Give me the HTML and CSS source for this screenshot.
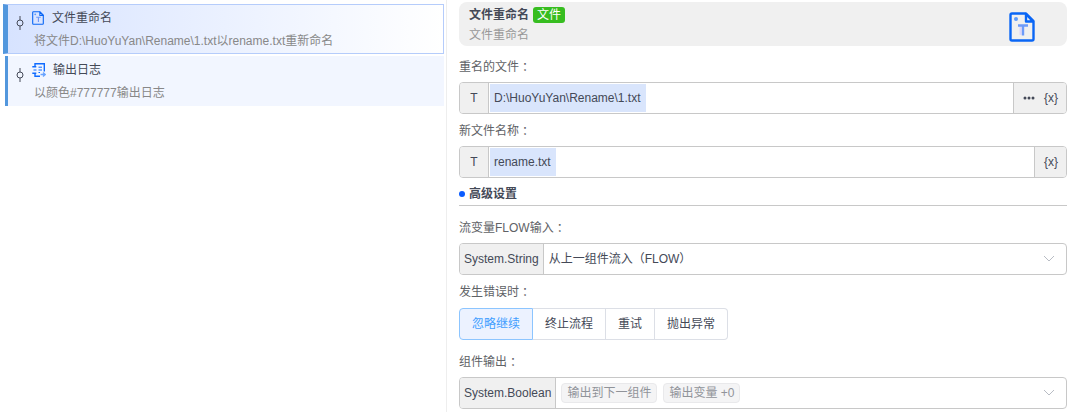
FILE: index.html
```html
<!DOCTYPE html>
<html lang="zh-CN">
<head>
    <meta charset="UTF-8">
    <meta name="viewport" content="width=device-width, initial-scale=1.0">
    <title>文件重命名</title>
    <link rel="stylesheet" href="styles.css">
</head>
<body>
    <!-- Flow steps -->
    <aside class="steps">
        <div class="step active">
            <svg class="node" viewBox="0 0 8 16"><path d="M4 1v4M4 11v4"/><circle cx="4" cy="8" r="3"/></svg>
            <div class="step-body">
                <div class="step-title">
                    <svg class="icon" viewBox="0 0 26 30"><use href="#file-icon"/></svg>
                    <span>文件重命名</span>
                </div>
                <div class="step-desc">将文件D:\HuoYuYan\Rename\1.txt以rename.txt重新命名</div>
            </div>
        </div>
        <div class="step nested">
            <svg class="node" viewBox="0 0 8 16"><path d="M4 1v4M4 11v4"/><circle cx="4" cy="8" r="3"/></svg>
            <div class="step-body">
                <div class="step-title">
                    <svg class="icon log-icon" viewBox="0 0 14 14">
                        <path d="M3 3.500V.8h9.300V8.500M3 10.500v2.700h5M.3 3.700h4M.3 10.300h4"/>
                        <path class="thin" d="M1.500 7h3M6.500 4.200h3.500M6.500 7h3.500M6.500 9.500h1.500"/>
                        <path class="soft" d="M8.500 11.500h4.500M11 9.500l2.200 2-2.200 2"/>
                    </svg>
                    <span>输出日志</span>
                </div>
                <div class="step-desc">以颜色#777777输出日志</div>
            </div>
        </div>
    </aside>

    <!-- Settings of the selected step -->
    <main class="settings">
        <header class="card">
            <div class="card-text">
                <div class="card-title"><h1>文件重命名</h1><span class="tag">文件</span></div>
                <div class="card-desc">文件重命名</div>
            </div>
            <svg class="card-icon" viewBox="0 0 26 30">
                <g id="file-icon">
                    <path class="file-line" d="M3 1.500h14L24.500 9v18q0 1.500-1.500 1.500H3Q1.500 28.500 1.500 27V3Q1.500 1.500 3 1.500z"/>
                    <path class="file-line" d="M17 2v7.500h7z"/>
                    <circle class="file-soft" cx="7" cy="7" r="2"/>
                    <path class="file-t-shade" d="M11.500 14v9"/>
                    <path class="file-t" d="M9 13.500h10M14 13.500v10"/>
                </g>
            </svg>
        </header>

        <form>
            <label class="label" for="source">重名的文件<span class="colon" lang="zh-TW">：</span></label>
            <div class="field">
                <span class="prefix type">T</span>
                <div class="value"><input class="chip" type="text" id="source" value="D:\HuoYuYan\Rename\1.txt"></div>
                <div class="suffix">
                    <button type="button" aria-label="选择文件">
                        <svg class="dots" viewBox="0 0 12 4"><circle cx="2" cy="2" r="1.500"/><circle cx="6" cy="2" r="1.500"/><circle cx="10" cy="2" r="1.500"/></svg>
                    </button>
                    <button type="button">{x}</button>
                </div>
            </div>

            <label class="label" for="target">新文件名称<span class="colon" lang="zh-TW">：</span></label>
            <div class="field">
                <span class="prefix type">T</span>
                <div class="value"><input class="chip" type="text" id="target" value="rename.txt"></div>
                <div class="suffix">
                    <button type="button">{x}</button>
                </div>
            </div>

            <h2 class="section">高级设置</h2>

            <label class="label" for="flow">流变量FLOW输入<span class="colon" lang="zh-TW">：</span></label>
            <div class="field">
                <span class="prefix">System.String</span>
                <select id="flow">
                    <option>从上一组件流入（FLOW）</option>
                </select>
                <svg class="arrow" viewBox="0 0 12 8"><path d="M1 1l5 5 5-5"/></svg>
            </div>

            <div class="label" id="error-label">发生错误时<span class="colon" lang="zh-TW">：</span></div>
            <div class="radios" role="radiogroup" aria-labelledby="error-label">
                <label><input type="radio" name="error" checked><span>忽略继续</span></label>
                <label><input type="radio" name="error"><span>终止流程</span></label>
                <label><input type="radio" name="error"><span>重试</span></label>
                <label><input type="radio" name="error"><span>抛出异常</span></label>
            </div>

            <label class="label" for="output">组件输出<span class="colon" lang="zh-TW">：</span></label>
            <div class="field">
                <span class="prefix">System.Boolean</span>
                <button class="multi" type="button" id="output">
                    <span class="option">输出到下一组件</span>
                    <span class="option">输出变量 +0</span>
                </button>
                <svg class="arrow" viewBox="0 0 12 8"><path d="M1 1l5 5 5-5"/></svg>
            </div>
        </form>
    </main>
</body>
</html>
```

FILE: styles.css
```css
/* Global Styles */
* {
    box-sizing: border-box;
}

body {
    margin: 0;
    display: flex;
    min-height: 100vh;
    background: #fff;
    color: #444957;
    font: 12px/20px "Liberation Sans", "Noto Sans CJK SC", sans-serif;
}

input,
select,
button {
    margin: 0;
    padding: 0;
    border: 0;
    outline: none;
    background: none;
    color: inherit;
    font: inherit;
}

svg {
    display: block;
    flex: none;
    fill: none;
}

/* Steps */
.steps {
    flex: 0 0 42%;
    max-width: 447px;
    padding: 4px 2px 0 3px;
    border-right: 1px solid #eee;
}

.step {
    display: flex;
    height: 50px;
    margin-bottom: 2px;
    padding-left: 8px;
    border-left: 3px solid #5297dd;
    background: #f2f6ff;
}

.step.active {
    border: 1px solid #b5ccfb;
    border-left: 5px solid #5297dd;
    background: linear-gradient(90deg, #d7e3ff, #fff);
}

.step.nested {
    margin-left: 2px;
    padding-top: 1px;
}

.node {
    width: 8px;
    height: 16px;
    margin-top: 10px;
    stroke: #444957;
}

.step-body {
    padding: 3px 0 0 10px;
}

.step-title {
    display: flex;
    align-items: center;
    gap: 8px;
    margin-left: -2px;
}

.step-desc {
    margin-top: 3px;
    color: #888;
    white-space: nowrap;
}

.icon {
    width: 12px;
    height: 14px;
}

.log-icon {
    width: 14px;
    margin-right: -1px;
    stroke: #0f6bff;
    stroke-width: 1.4;
}

.log-icon .thin {
    stroke-width: 1;
}

.log-icon .soft {
    stroke: #6aa4ff;
}

.file-line {
    stroke: #0a66f5;
    stroke-width: 2.4;
    stroke-linejoin: round;
}

.file-soft {
    fill: #5c9afb;
}

.file-t {
    stroke: #6d9bf9;
    stroke-width: 2.4;
}

.file-t-shade {
    stroke: #ddd6fb;
    stroke-width: 2;
}

/* Header Card */
.settings {
    flex: 1;
    min-width: 0;
    padding: 2px 3px 3px 12px;
}

.card {
    display: flex;
    align-items: center;
    justify-content: space-between;
    height: 44px;
    margin-bottom: 4px;
    padding: 3px 32px 1px 10px;
    border-radius: 8px;
    background: #f0f0f0;
}

.card-title {
    display: flex;
    align-items: center;
    gap: 4px;
}

.card-title h1 {
    margin: 0;
    font-size: 12px;
}

.tag {
    padding: 0 4px;
    border-radius: 3px;
    background: #37bd20;
    color: #fff;
    line-height: 16px;
}

.card-desc {
    color: #999;
}

.card-icon {
    width: 26px;
    height: 30px;
    margin-top: 4px;
}

/* Form Fields */
.label {
    display: flex;
    height: 32px;
    padding-top: 2px;
    color: #606266;
    line-height: 30px;
}

.colon {
    font-family: "Noto Sans CJK TC", sans-serif;
}

.field {
    display: flex;
    align-items: center;
    height: 32px;
    border: 1px solid #c8c8c8;
    border-radius: 4px;
    overflow: hidden;
}

.prefix,
.suffix {
    display: flex;
    align-items: center;
    align-self: stretch;
    background: #f0f0f0;
}

.prefix {
    padding: 0 4px;
    border-right: 1px solid #c8c8c8;
}

.prefix.type {
    justify-content: center;
    width: 29px;
}

.suffix {
    gap: 9px;
    padding: 0 8px 0 9px;
    border-left: 1px solid #c8c8c8;
}

.suffix button {
    cursor: pointer;
}

.dots {
    width: 12px;
    height: 4px;
    fill: #444957;
}

.value {
    display: flex;
    flex: 1;
    min-width: 0;
    padding: 1px;
}

.chip {
    height: 28px;
    padding: 0 5px 0 4px;
    background: #d9e5fc;
    field-sizing: content;
}

.field select,
.multi {
    flex: 1;
    min-width: 0;
    height: 30px;
    appearance: none;
    padding-left: 5px;
    text-align: left;
}

.arrow {
    width: 12px;
    height: 8px;
    margin-right: 11px;
    stroke: #b8bcc4;
}

.section {
    display: flex;
    align-items: center;
    gap: 4px;
    margin: 0 0 5px;
    padding: 6px 0 1px;
    border-bottom: 1px solid #c8c8c8;
    font-size: 12px;
}

.section::before {
    content: "";
    width: 6px;
    height: 6px;
    border-radius: 50%;
    background: #0a5cff;
}

/* Radio Buttons */
.radios {
    display: flex;
    margin: 1px 0 5px;
}

.radios input {
    position: absolute;
    opacity: 0;
}

.radios span {
    display: block;
    padding: 5px 12px;
    border: 1px solid #dcdfe6;
    border-left-width: 0;
}

.radios label:first-child span {
    border-left-width: 1px;
    border-radius: 4px 0 0 4px;
}

.radios label:last-child span {
    border-radius: 0 4px 4px 0;
}

.radios input:checked + span {
    border-color: #8cc5ff;
    background: #ecf2ff;
    color: #409eff;
}

/* Output Tags */
.multi {
    display: flex;
    align-items: center;
    gap: 6px;
}

.option {
    padding: 0 5px;
    border: 1px solid #e9e9eb;
    border-radius: 4px;
    background: #f4f4f5;
    color: #909399;
    line-height: 18px;
    white-space: nowrap;
}
```
